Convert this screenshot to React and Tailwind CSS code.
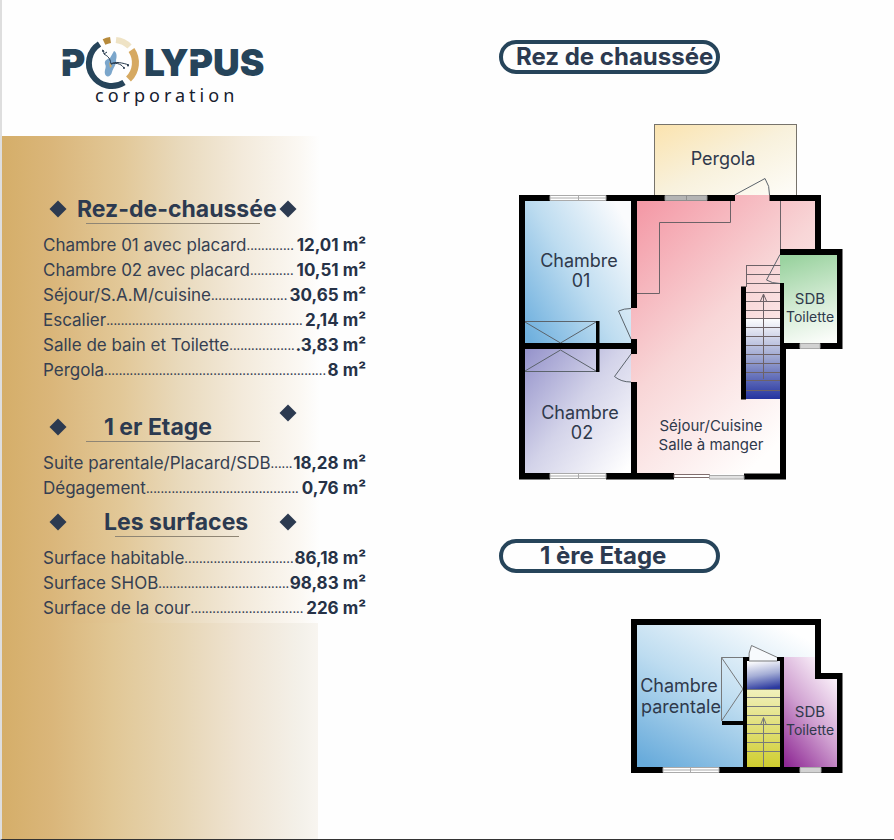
import React from "react";

const sections = [
  {
    title: "Rez-de-chaussée",
    titleClass: "pl-[13px]",
    rightDiamond: "self-center",
    rule: "ml-[86px] w-[174px]",
    spacing: "pt-[59px]",
    rows: [
      ["Chambre 01 avec placard", 13, "12,01 m²"],
      ["Chambre 02 avec placard", 12, "10,51 m²"],
      ["Séjour/S.A.M/cuisine", 21, "30,65 m²"],
      ["Escalier", 54, "2,14 m²"],
      ["Salle de bain et Toilette", 18, ".3,83 m²"],
      ["Pergola", 61, "8 m²"],
    ],
  },
  {
    title: "1 er Etage",
    titleClass: "pl-[40px]",
    rightDiamond: "self-start -mt-[6px]",
    rule: "ml-[86px] w-[174px]",
    spacing: "pt-[30px]",
    rows: [
      ["Suite parentale/Placard/SDB", 6, "18,28 m²"],
      ["Dégagement", 42, "0,76 m²"],
    ],
  },
  {
    title: "Les surfaces",
    titleClass: "pl-[40px]",
    rightDiamond: "self-center",
    rule: "ml-[115px] w-[124px]",
    spacing: "pt-[7px]",
    rows: [
      ["Surface habitable", 30, "86,18 m²"],
      ["Surface SHOB", 36, "98,83 m²"],
      ["Surface de la cour", 31, "226 m²"],
    ],
  },
];

function Diamond({ className }) {
  return <span aria-hidden="true" className={`size-3 shrink-0 rotate-45 bg-[#2c3a50] ${className ?? ""}`} />;
}

function Logo() {
  return (
    <svg viewBox="58 30 214 80" className="ml-[58px] h-20 w-[214px]" role="img" aria-label="Polypus corporation">
      <g fill="#26445a" fontFamily="Inter, sans-serif" fontWeight="900" fontSize="37">
        <text x="61" y="76">P</text>
        <text x="144" y="76">LYPUS</text>
      </g>
      <path d="M60 58H72M190 58H204" stroke="#fefefe" strokeWidth="3" />
      <circle cx="113" cy="62.500" r="27" fill="#fefefe" />
      <g fill="none" strokeWidth="6">
        <path d="M99.500 44A22.500 22.500 0 1 0 124 82.500" stroke="#26445a" />
        <path d="M131.500 50A22.500 22.500 0 0 1 128.500 79" stroke="#d6a961" strokeWidth="7" />
        <path d="M116 40A22.500 22.500 0 0 1 129.500 46.500" stroke="#efe3c5" />
        <path d="M104 42A22.500 22.500 0 0 1 110.500 40" stroke="#b78a3b" />
      </g>
      <path d="M114 51C117 52 117 57 116 60C117 64 113 68 112 72C111 77 106 78 105 74C104 70 107 67 105 64C104 60 108 59 110 58Z" fill="#7ba6cb" />
      <g fill="none" stroke="#26394c" strokeWidth="1">
        <path d="M111 64C110 57 107 56 104 54C103 52 105 51 102 50M104 54L107 52M111 64C115 61 123 63 129 65M111 64C118 62 122 65 124 68" />
      </g>
      <path d="M109 62L112 66L110 68Z" fill="#d6a961" />
      <circle cx="103" cy="51" r="1" fill="#26394c" />
      <circle cx="128" cy="65.500" r="1" fill="#26394c" />
      <circle cx="124" cy="68" r="1" fill="#26394c" />
      <text x="95" y="102" fill="#16202e" fontFamily="'Noto Sans', sans-serif" fontSize="18" letterSpacing="4">corporation</text>
    </svg>
  );
}

function Section({ title, titleClass, rightDiamond, rule, spacing, rows }) {
  return (
    <section className={spacing}>
      <div className="ml-[52px] flex h-7 w-[242px] items-center">
        <Diamond />
        <h2 className={`min-w-0 flex-1 whitespace-nowrap text-[23px] font-bold leading-7 text-[#2c3a50] ${titleClass}`}>{title}</h2>
        <Diamond className={rightDiamond} />
      </div>
      <div className={`h-px bg-[#8f8574] ${rule}`} />
      <dl className="ml-[43px] mt-[9px] w-[323px] text-[17px] leading-[25px] text-[#354052]">
        {rows.map(([label, dots, value]) => (
          <div key={label} className="flex whitespace-nowrap">
            <dt>{label}</dt>
            <dd className="flex flex-1 justify-between">
              <span className="text-[12px] font-medium">{".".repeat(dots)}</span>
              <span className="font-bold text-[#263247]">{value}</span>
            </dd>
          </div>
        ))}
      </dl>
    </section>
  );
}

function PlanTitle({ children, className }) {
  return (
    <h2 className={`flex h-[34px] w-[221px] items-center whitespace-nowrap rounded-full border-4 border-[#26445a] text-[24px] font-bold leading-7 text-[#2c3a50] ${className}`}>
      {children}
    </h2>
  );
}

function Gradient({ id, from, to, x1 = 0, y1 = 0, x2 = 1, y2 = 1, mid }) {
  return (
    <linearGradient id={id} x1={x1} y1={y1} x2={x2} y2={y2}>
      <stop offset="0" stopColor={from} />
      {mid && <stop offset="0.5" stopColor={mid} />}
      <stop offset="1" stopColor={to} />
    </linearGradient>
  );
}

const steps1 = [265.5, 274.5, 283.5, 292.5, 301.5, 310.5, 318.5, 327.5, 336.5, 345.5, 354.5, 363.5, 372.5, 380.5, 390.5];
const steps2 = [689.5, 697.5, 706.5, 715.5, 724.5, 733.5, 742.5, 751.5];

function GroundFloor() {
  return (
    <svg viewBox="519 120 324 362" className="ml-5 mt-[46px] h-[362px] w-[324px]" role="img" aria-label="Plan du rez de chaussée">
      <defs>
        <Gradient id="pergola" from="#fbe3ae" mid="#f8f1dc" to="#fefdf9" />
        <Gradient id="living" from="#f499a6" mid="#f8d6d7" to="#fffefd" x1={0.1} x2={0.7} y2={0.95} />
        <Gradient id="room1" from="#6fb0de" mid="#bddcf0" to="#fafbfd" x1={0} y1={0.9} x2={0.95} y2={0.15} />
        <Gradient id="room2" from="#9391ca" mid="#d3d3e9" to="#ffffff" y2={0.9} />
        <Gradient id="bath1" from="#9bd3a0" mid="#cfe9d0" to="#fbfdfa" x1={0.4} x2={0.6} />
        <Gradient id="stairs1" from="#ffffff" mid="#9ba4cf" to="#2433a0" x2={0} />
      </defs>
      <rect x="654.5" y="124.500" width="142" height="71" fill="url(#pergola)" stroke="#77736b" />
      <rect x="524" y="200" width="108" height="145" fill="url(#room1)" />
      <rect x="524" y="348" width="108" height="127" fill="url(#room2)" />
      <path d="M636 200H734V195H770V200H816V250H781V474H636V382H631V354H636V339H631V308H636Z" fill="url(#living)" />
      <rect x="780" y="254" width="58" height="91" fill="url(#bath1)" />
      <rect x="746" y="318" width="34" height="81" fill="url(#stairs1)" />
      <g fill="none" stroke="#6d6267" strokeWidth="1">
        <path d="M636 293.500H659.500V222.500H730.500V201M780.500 201V250" />
        <path d="M746.500 287V265.500H780.500" />
        {steps1.map((y) => <path key={y} d={`M746 ${y}H780`} />)}
        <path d="M763.500 379V295M760.500 301L763.500 294L766.500 301" />
      </g>
      <g fill="none" stroke="#5b636b" strokeWidth="1">
        <path d="M525 321.500H596M525 322L560.500 343L596 322M525 371.500H596M525 371L560.500 350L596 371" />
        <path d="M631 339L618.500 311Q624 308.500 631 308.500" />
        <path d="M631 354L614.500 376.500Q621 382 631 382" />
        <path d="M734.500 195L765 178.500Q770 186 769.500 195" />
        <path d="M780 254.500L766.500 280Q772 283.500 780 283.500" />
      </g>
      <g fill="#000">
        <path d="M519 195H550V201H525V473H550V479.500H519Z" />
        <rect x="606" y="195" width="59" height="6" />
        <rect x="631" y="195" width="6" height="113" />
        <rect x="631" y="339" width="6" height="15" />
        <rect x="519" y="343" width="117" height="6" />
        <rect x="631" y="382" width="6" height="97" />
        <rect x="606" y="473" width="68" height="6.500" />
        <rect x="596" y="321" width="3.500" height="51" />
        <rect x="707" y="195" width="28" height="6" />
        <path d="M769.500 195H821V250H815V201H769.500Z" />
        <path d="M780 249H842.500V349H820V343H837V255H780Z" />
        <path d="M780 283H784V343H800V349H786V479.500H744V473.500H780Z" />
        <rect x="741" y="286.500" width="5" height="113" />
      </g>
      <g fill="#fff" stroke="#aaa" strokeWidth="1">
        <path d="M550 195.500H606V200.500H550ZM550 198H606M578.500 195V201" />
        <path d="M550 473.500H606V478.500H550ZM550 476H606M578.500 473V479" />
        <path d="M665 195.500H707V200.500H665ZM686.500 195V201" fill="#b4b4b4" stroke="#8f8f8f" />
        <path d="M800 343.500H820V348.500H800Z" fill="#d2d2d2" />
        <path d="M674 474.500H709.500V477.500H674Z" stroke="#806d6d" />
        <path d="M709.500 475.500H744V479H709.500Z" fill="#e2e2e2" />
      </g>
      <g fill="#2f394b" fontFamily="Inter, sans-serif" textAnchor="middle" fontSize="18">
        <text x="723" y="165">Pergola</text>
        <text x="579" y="267">Chambre</text>
        <text x="581" y="287">01</text>
        <text x="580" y="419">Chambre</text>
        <text x="582" y="439">02</text>
        <text x="711" y="431" fontSize="15">Séjour/Cuisine</text>
        <text x="711" y="450" fontSize="15">Salle à manger</text>
        <text x="810" y="304" fontSize="15">SDB</text>
        <text x="810" y="322" fontSize="14">Toilette</text>
      </g>
    </svg>
  );
}

function FirstFloor() {
  return (
    <svg viewBox="519 616 324 160" className="ml-5 mt-[43px] h-40 w-[324px]" role="img" aria-label="Plan de la 1 ère étage">
      <defs>
        <Gradient id="suite" from="#68abdb" mid="#bddcf0" to="#ffffff" x1={0.1} y1={1} x2={0.8} y2={0} />
        <Gradient id="bath2" from="#8f2a95" mid="#cf9fd0" to="#fdf6fc" x1={0.1} y1={1} x2={0.7} y2={0} />
        <Gradient id="landing" from="#ffffff" mid="#a5aed6" to="#2b399f" x1={0.4} x2={0.6} />
        <Gradient id="stairs2" from="#f1f0bd" to="#cfcd2e" x2={0} />
      </defs>
      <path d="M636 624H816V657H784V768H636Z" fill="url(#suite)" />
      <path d="M784 657H816V678H838V768H784Z" fill="url(#bath2)" />
      <rect x="746" y="660" width="34" height="29" fill="url(#landing)" />
      <rect x="746" y="689" width="34" height="79" fill="url(#stairs2)" />
      <g fill="none" stroke="#77797b" strokeWidth="1">
        {steps2.map((y) => <path key={y} d={`M746 ${y}H780`} />)}
        <path d="M763.500 767V718M760.500 725L763.500 717.500L766.500 725" />
        <path d="M743 657.500H721.500V721L743 689L721.500 657.500" />
        <path d="M749 661Q748 653 751.500 645.500L777.500 657.500V661Z" fill="#f7fafd" />
      </g>
      <g fill="#000">
        <path d="M631 619H821V673H842.500V773H821V767H837V679H815V625H637V767H663V773H631Z" />
        <path d="M719 767H743V657H749V661H747V767H780V661H777V657H784V767H800V773H719Z" />
        <rect x="722" y="721" width="21" height="4" />
      </g>
      <g fill="#fff" stroke="#aaa" strokeWidth="1">
        <path d="M663 767.500H719V772.500H663ZM663 770H719M690.500 767V773" />
        <path d="M800 767.500H821V772.500H800Z" fill="#d2d2d2" />
      </g>
      <g fill="#2f394b" fontFamily="Inter, sans-serif" textAnchor="middle" fontSize="18">
        <text x="679" y="692">Chambre</text>
        <text x="681" y="713">parentale</text>
        <text x="810" y="717" fontSize="15">SDB</text>
        <text x="810" y="735" fontSize="14">Toilette</text>
      </g>
    </svg>
  );
}

export default function App() {
  return (
    <main className="flex min-h-screen border-b border-l-2 border-b-[#333333] border-l-[#dedede] bg-[#fefefe] font-['Inter',sans-serif]">
      <div className="-ml-0.5 flex w-[400px] shrink-0 flex-col">
        <header className="flex h-[136px] items-start pt-[30px]">
          <Logo />
        </header>
        <div className="ml-0.5 bg-[linear-gradient(to_right,#d5ae69_0px,#dab67a_50px,#e2c898_120px,#e9dabd_180px,#f3eadb_240px,#fbf8f3_298px,#fefefe_318px)] pb-0.5">
          <div className="-ml-0.5">
            {sections.map((section) => <Section key={section.title} {...section} />)}
          </div>
        </div>
        <div className="ml-0.5 w-[316px] flex-1 bg-[linear-gradient(to_right,#d5ae69_0px,#dab67a_50px,#e1c795_110px,#e7d6b5_180px,#efe4d3_240px,#f4f1ea_300px,#f8f5f0_316px)]" />
      </div>
      <div className="ml-[99px] pt-10">
        <PlanTitle className="pl-[13px]">Rez de chaussée</PlanTitle>
        <GroundFloor />
        <PlanTitle className="mt-[57px] pl-[37px]">1 ère Etage</PlanTitle>
        <FirstFloor />
      </div>
    </main>
  );
}
